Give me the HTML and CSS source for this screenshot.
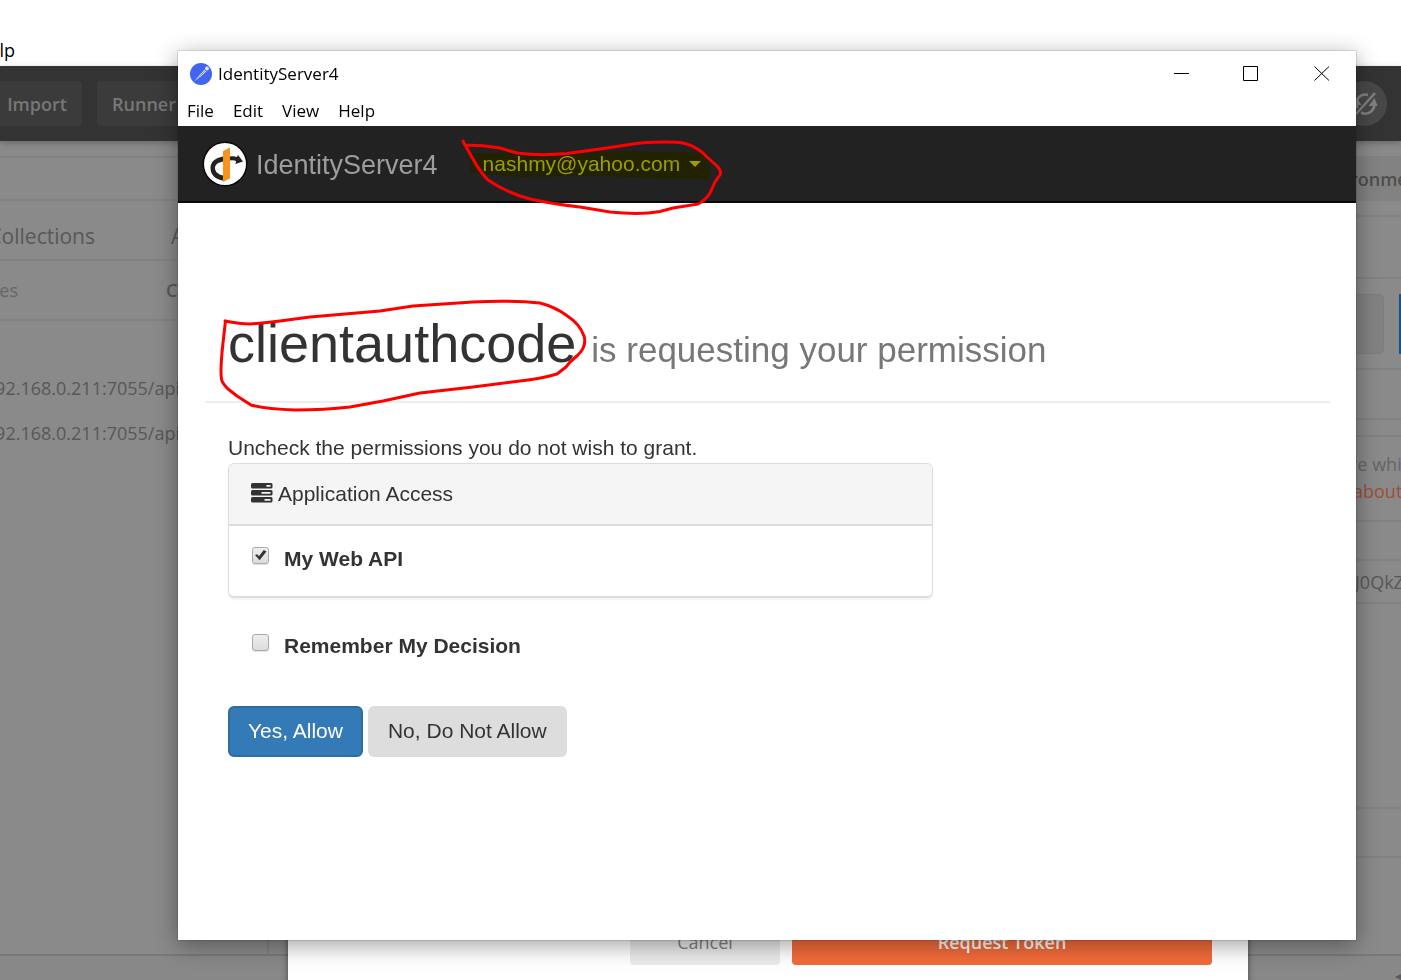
FILE: index.html
```html
<!DOCTYPE html>
<html lang="en">
<head>
<meta charset="utf-8">
<title>IdentityServer4</title>
<link rel="stylesheet" href="styles.css">
</head>
<body>
<div class="desktop">
  <div class="app">
    <nav class="app-menu"><span>Help</span></nav>
    <header class="app-toolbar">
      <button class="tool tool-import" type="button">Import</button>
      <button class="tool tool-runner" type="button">Runner</button>
      <button class="sync" type="button" aria-label="Sync off">
        <svg viewBox="0 0 45 45" width="45" height="45" fill="none" stroke="#808080" stroke-width="2.600">
          <path d="M15.500 27A9 9 0 0 1 26 14M31.500 20A9 9 0 0 1 19 31.500M14 33L33 12"/>
          <path d="M10.500 24l4.500-7 4.500 7zM26.500 25l6-8 3 8z" fill="#808080" stroke="none"/>
        </svg>
      </button>
    </header>
    <div class="app-body">
      <aside class="side">
        <div class="side-search"></div>
        <div class="side-tabs"><span class="tab-first">Collections</span><span>APIs</span></div>
        <div class="side-sub"><span class="sub-first">Responses</span><b>Clear all</b></div>
        <ul class="history">
          <li>http://192.168.0.211:7055/api</li>
          <li>http://192.168.0.211:7055/api</li>
        </ul>
      </aside>
      <section class="detail">
        <div class="env">ronment</div>
        <div class="row row-a"></div>
        <div class="row row-b"></div>
        <div class="row row-url"><span class="url-box"></span><span class="send"></span></div>
        <div class="row row-c"></div>
        <div class="row row-d"></div>
        <div class="row row-note"><span>re which</span><a href="#">about</a></div>
        <div class="row row-e"></div>
        <div class="row row-token">J0QkZ</div>
        <div class="row row-f"></div>
        <div class="row row-g"></div>
      </section>
    </div>
    <footer class="app-status"><span>◂</span></footer>
    <div class="token-dialog">
      <button class="dialog-button cancel" type="button">Cancel</button>
      <button class="dialog-button request" type="button">Request Token</button>
    </div>
  </div>

  <main class="window">
    <header class="titlebar">
      <svg class="app-icon" viewBox="0 0 22 22" width="22" height="22">
        <circle cx="11" cy="11" r="11" fill="#4165ee"/>
        <path d="M4 18.500L11 10.500l1.500 1.500z" fill="#dfe6ff"/>
        <path d="M8.500 13L14.500 6.500l2 2-6.500 6z" fill="#dfe6ff" stroke="#4165ee" stroke-width=".5"/>
        <path d="M10 13l5.500-5.500" stroke="#4165ee" stroke-width=".6"/>
        <circle cx="17" cy="5.500" r="1.900" fill="#dfe6ff"/>
      </svg>
      <span class="title">IdentityServer4</span>
      <div class="controls">
        <button type="button" aria-label="Minimize"><svg viewBox="0 0 16 16" width="16" height="16"><path d="M0 7.500h15"/></svg></button>
        <button type="button" aria-label="Maximize"><svg viewBox="0 0 16 16" width="16" height="16"><path d="M-.5 .5h14v14h-14z"/></svg></button>
        <button type="button" aria-label="Close"><svg viewBox="0 0 16 16" width="16" height="16"><path d="M.5 .5l14.500 14M15 .5L.5 14.500"/></svg></button>
      </div>
    </header>
    <nav class="menubar">
      <button type="button">File</button>
      <button type="button">Edit</button>
      <button type="button">View</button>
      <button type="button">Help</button>
    </nav>
    <nav class="navbar">
      <a class="brand" href="#">
        <svg viewBox="0 0 46 46" width="46" height="46">
          <circle cx="23" cy="23" r="22.500" fill="#080808"/>
          <circle cx="23" cy="23" r="21" fill="#fff"/>
          <path d="M21 15.500C13 17 8.500 21 8.500 27c0 7 5 11.500 12.500 12.500v-5c-5-1-8-4-8-7.500s3-5.500 8-6.500z" fill="#222"/>
          <path d="M28 15.500c3-.5 5 0 7 .5l1-2 5 6.500-7.500 2.500.5-3c-2-1-3.500-1-6-.5z" fill="#222"/>
          <path d="M21 10l7-3.500v31L21 41z" fill="#f7941d"/>
        </svg>
        <span>IdentityServer4</span>
      </a>
      <button class="user" type="button">nashmy@yahoo.com<span class="caret"></span></button>
    </nav>
    <form class="page">
      <h1>clientauthcode <small>is requesting your permission</small></h1>
      <div class="column">
        <p>Uncheck the permissions you do not wish to grant.</p>
        <section class="panel">
          <h2>
            <svg viewBox="0 0 22 22" width="22" height="22">
              <rect width="21.500" height="5.500" rx="1.500" fill="#333"/>
              <rect y="7" width="21.500" height="5.500" rx="1.500" fill="#333"/>
              <rect y="14" width="21.500" height="5.500" rx="1.500" fill="#333"/>
              <path d="M15.500 2h4v1.700h-4zM10.500 9h9v1.700h-9zM13.500 16h6v1.700h-6z" fill="#f5f5f5"/>
            </svg>
            <span>Application Access</span>
          </h2>
          <label class="check"><input type="checkbox" checked><span>My Web API</span></label>
        </section>
        <label class="check remember"><input type="checkbox"><span>Remember My Decision</span></label>
        <div class="actions">
          <button class="btn primary" type="button">Yes, Allow</button>
          <button class="btn plain" type="button">No, Do Not Allow</button>
        </div>
      </div>
    </form>
    <svg class="ink highlight" viewBox="178 51 600 380" width="600" height="380">
      <path class="marker" d="M470 153L520 153 560 155 620 151 709 153 710 179 650 178 600 176 520 177 470 173z"/>
    </svg>
    <svg class="ink" viewBox="178 51 600 380" width="600" height="380">
      <path class="pen" d="M463 141L465 145 473 159Q480 172 488 180 507 193 530 199 553 204 580 207L610 212Q640 215 660 211.500L673 208 698 204Q706 200 710 193L715 182 720.500 174Q721 170 717 166L707 157Q698 147 685 143.500 673 141 640 143L600 149 567 153.500Q540 156 517 153L500 148Q483 145 465 145"/>
      <path class="pen" d="M225 321Q240 324 250 324 265 323 280 321L310 317 380 311 413 306 473 302Q510 300 540 303 555 307 566 315 580 324 584 336 587 346 578 355L570 362 566 367 557 374Q540 379 520 381L473 387 420 393 383 401 350 407Q325 410 295 410 265 409 251 405L237 396 228 389Q222 383 221.500 379 220 370 223 343L225.500 321"/>
    </svg>
  </main>
</div>
</body>
</html>
```
FILE: styles.css
```css
* { box-sizing: border-box; }
body { margin: 0; background: #fff; font-family: "Open Sans", "Noto Sans", sans-serif; font-size: 18px; }
button { font: inherit; border: 0; padding: 0; background: none; color: inherit; }
svg { display: block; overflow: visible; }

.desktop { position: relative; height: 100vh; overflow: hidden; }

/* Dimmed application behind the dialog */
.app { position: relative; z-index: 0; height: 100%; display: flex; flex-direction: column; overflow: hidden; color: #585858; }
.app-menu { display: flex; justify-content: flex-end; width: 15px; height: 66px; padding-top: 38px; font-size: 18px; line-height: 24px; color: #000; }
.app-toolbar { display: flex; align-items: center; gap: 15px; height: 75px; flex: none; background: #333; padding-right: 14px; box-shadow: 0 2px 6px rgba(0, 0, 0, .25); z-index: 1; font-weight: 600; color: #777; }
.tool { height: 45px; background: #3b3b3b; border-radius: 4px; }
.tool-import { width: 82px; padding-right: 8px; border-radius: 0 4px 4px 0; }
.tool-runner { width: 110px; padding-right: 16px; }
.sync { margin-left: auto; width: 45px; height: 45px; border-radius: 50%; background: #484848; }
.app-body { flex: 1; display: flex; justify-content: space-between; background: #8a8a8a; min-height: 0; }
.side { width: 269px; padding-top: 15px; border-right: 2px solid #808080; }
.side-search { height: 45px; border-top: 2px solid #828282; border-bottom: 2px solid #828282; }
.side-tabs, .side-sub { display: flex; align-items: center; height: 60px; border-bottom: 2px solid #828282; }
.side-tabs { font-size: 21px; gap: 76px; padding-top: 12px; }
.tab-first { display: flex; justify-content: flex-end; width: 95px; flex: none; }
.side-sub { gap: 148px; color: #666; }
.sub-first { display: flex; justify-content: flex-end; width: 18px; flex: none; }
.side-sub b { color: #585858; font-weight: 600; white-space: nowrap; }
.history { list-style: none; margin: 0; padding: 45px 0 0; width: 180px; }
.history li { display: flex; justify-content: flex-end; line-height: 45px; }
.detail { width: 53px; padding-top: 15px; overflow: hidden; white-space: nowrap; }
.row { border-bottom: 2px solid #828282; padding-left: 2px; }
.env { height: 45px; line-height: 47px; padding-left: 2px; background: #828282; font-weight: 600; color: #4e4e4e; }
.row-a { height: 16px; }
.row-b { height: 62px; }
.row-url { height: 91px; padding: 15px 0 14px; display: flex; justify-content: space-between; }
.url-box { width: 36px; border: 1px solid #7c7c7c; border-left: 0; border-radius: 0 5px 5px 0; background: #828282; }
.send { width: 2px; background: #1b4f80; }
.row-c { height: 50px; }
.row-d { height: 17px; }
.row-note { height: 85px; padding-top: 14px; display: flex; flex-direction: column; line-height: 27px; color: #666; }
.row-note a { padding-left: 3px; color: #9b5037; text-decoration: none; }
.row-e { height: 39px; }
.row-token { height: 43px; padding-left: 7px; line-height: 42px; }
.row-f { height: 205px; }
.row-g { height: 49px; }
.app-status { height: 26px; flex: none; border-top: 2px solid #787878; background: #888; text-align: right; font-size: 12px; line-height: 40px; overflow: hidden; }
.token-dialog { position: absolute; left: 288px; right: 153px; top: 300px; bottom: -60px; display: flex; align-items: flex-end; justify-content: flex-end; gap: 12px; padding: 0 36px 75px; background: #fff; box-shadow: 0 0 6px rgba(0, 0, 0, .5); }
.dialog-button { height: 45px; padding-bottom: 2px; border-radius: 4px; }
.cancel { width: 150px; background: #ebebeb; color: #808080; }
.request { width: 420px; background: #f26b3a; color: #fff; font-weight: 600; }

/* Consent window */
.window { position: absolute; z-index: 1; left: 178px; right: 45px; top: 51px; bottom: 40px; background: #fff; color: #000; box-shadow: 0 0 0 1px rgba(0, 0, 0, .1), 0 5px 22px rgba(0, 0, 0, .38); }
.titlebar { display: flex; align-items: center; gap: 6px; height: 45px; padding-left: 12px; font-size: 17px; }
.controls { display: flex; margin-left: auto; gap: 23px; margin-right: 11px; }
.controls button { width: 47px; height: 32px; display: grid; place-items: center; }
.controls path { fill: none; stroke: #000; }
.menubar { display: flex; gap: 19px; height: 30px; padding: 0 9px; font-size: 17px; line-height: 28px; }
.navbar { display: flex; align-items: center; height: 77px; padding-left: 24px; background: #222; border-bottom: 2px solid #080808; color: #9d9d9d; font-family: "Liberation Sans", Arial, sans-serif; }
.brand { display: flex; align-items: center; gap: 8px; color: inherit; text-decoration: none; font-size: 27px; line-height: 34px; }
.brand span { padding-top: 2px; }
.user { display: flex; align-items: center; gap: 9px; margin-left: 45px; font-size: 21px; }
.caret { border: 6px solid transparent; border-top-color: currentColor; border-bottom: 0; }
.page { padding: 111px 26px 0 27px; font-family: "Liberation Sans", Arial, sans-serif; font-size: 21px; line-height: 30px; color: #333; }
h1 { margin: 0; padding: 0 23px 22px; border-bottom: 2px solid #eee; font-size: 54px; font-weight: 400; line-height: 59px; }
h1 small { font-size: 35px; color: #777; }
.column { width: 66.667%; padding: 30px 22px 0 23px; }
.column p { margin: 0; }
.panel { border: 1px solid #ddd; border-bottom-width: 2px; border-radius: 6px; box-shadow: 0 2px 2px rgba(0, 0, 0, .05); }
.panel h2 { display: flex; align-items: center; gap: 5px; height: 62px; margin: 0; padding: 0 22px; background: #f5f5f5; border-bottom: 2px solid #ddd; border-radius: 5px 5px 0 0; font-size: 21px; font-weight: 400; }
.panel .check { height: 70px; padding: 18px 23px; }
.check { display: flex; gap: 15px; font-weight: 700; }
.check input { appearance: none; margin: 3px 0 0; width: 17px; height: 17px; border: 1px solid #aaa; border-radius: 3px; background: linear-gradient(#eee, #dcdcdc); box-shadow: 0 1px 1px rgba(0, 0, 0, .12); }
.check input:checked::before { content: ""; display: block; width: 13px; height: 12px; margin: 1px; background: #333; clip-path: polygon(8% 50%, 25% 43%, 38% 60%, 75% 8%, 96% 20%, 43% 94%); }
.remember { padding: 33px 24px 0; }
.actions { display: flex; gap: 5px; padding-top: 45px; }
.btn { height: 51px; padding: 0 20px 2px; border-radius: 6px; }
.primary { padding: 0 18px 2px; background: #337ab7; border: 2px solid #2e6da4; color: #fff; }
.plain { background: #ddd; }

/* Hand-drawn markup */
.ink { position: absolute; left: 0; top: 0; pointer-events: none; }
.highlight { mix-blend-mode: multiply; }
.marker { fill: #ff0; }
.pen { fill: none; stroke: #f00; stroke-width: 3; stroke-linejoin: round; stroke-linecap: round; }
```
